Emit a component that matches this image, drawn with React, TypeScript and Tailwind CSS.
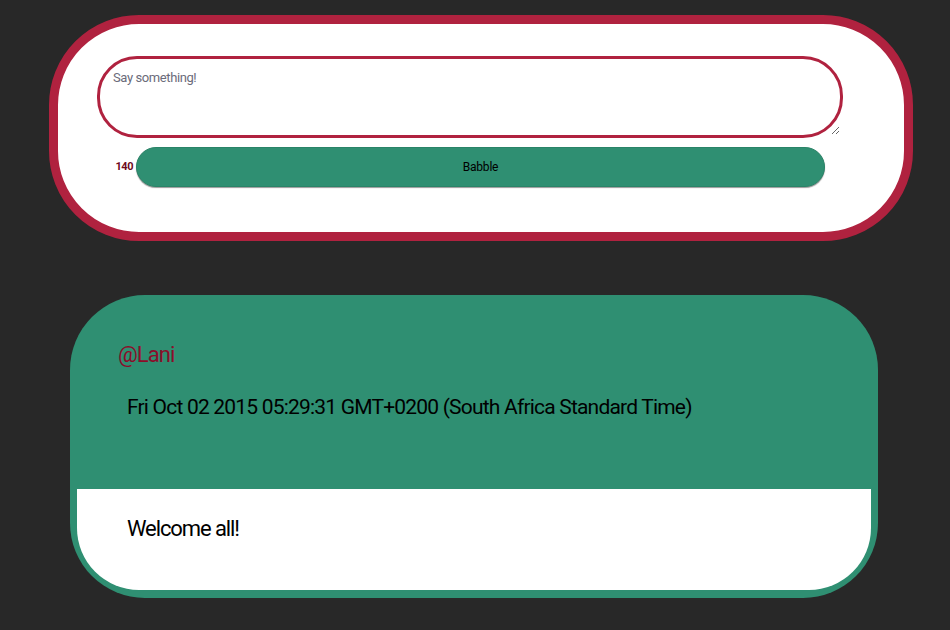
import { useState } from 'react'

export default function App() {
  const [text, setText] = useState('')

  return (
    <div className="min-h-[630px] w-[950px] bg-[#282828] pt-[15px] font-['Roboto',sans-serif]">
      {/* Compose card */}
      <div className="ml-[49px] h-[226px] w-[864px] rounded-[90px] border-[9px] border-[#b0223f] bg-white pl-[39px] pr-[61px] pt-[32px]">
        <textarea
          value={text}
          onChange={(e) => setText(e.target.value)}
          placeholder="Say something!"
          className="block h-[82px] w-[746px] resize rounded-[40px] border-[3px] border-[#b0223f] bg-white px-[13px] py-[9px] text-[13px] tracking-[-0.4px] text-gray-700 outline-none placeholder:text-[#6b6b7a]"
        />
        <div className="mt-[9px] flex items-center">
          <span className="w-[39px] pr-[3px] text-right text-[11px] font-bold tracking-[-0.5px] text-[#6e0a1c]">{140 - text.length}</span>
          <button className="h-[40px] w-[689px] rounded-[20px] border border-[#2a8468] bg-[#2f8f72] text-[12px] tracking-[-0.2px] text-black shadow-[0_1px_1px_#9a9a9a]">
            Babble
          </button>
        </div>
      </div>

      {/* Post card */}
      <div className="ml-[70px] mt-[54px] w-[808px] rounded-[75px] bg-[#2f8f72] px-[7px] pb-[8px]">
        <div className="h-[194px] pl-[41px] pt-[44px]">
          <div className="text-[22px] leading-[32px] tracking-[-0.9px] text-[#8b0d2a]">@Lani</div>
          <div className="mt-[21px] pl-[9px] text-[21px] leading-[30px] tracking-[-0.8px] text-black">
            Fri Oct 02 2015 05:29:31 GMT+0200 (South Africa Standard Time)
          </div>
        </div>
        <div className="h-[101px] rounded-b-[62px] bg-white pl-[50px] pt-[25px]">
          <div className="text-[22px] leading-[30px] tracking-[-1.1px] text-black">Welcome all!</div>
        </div>
      </div>
    </div>
  )
}
